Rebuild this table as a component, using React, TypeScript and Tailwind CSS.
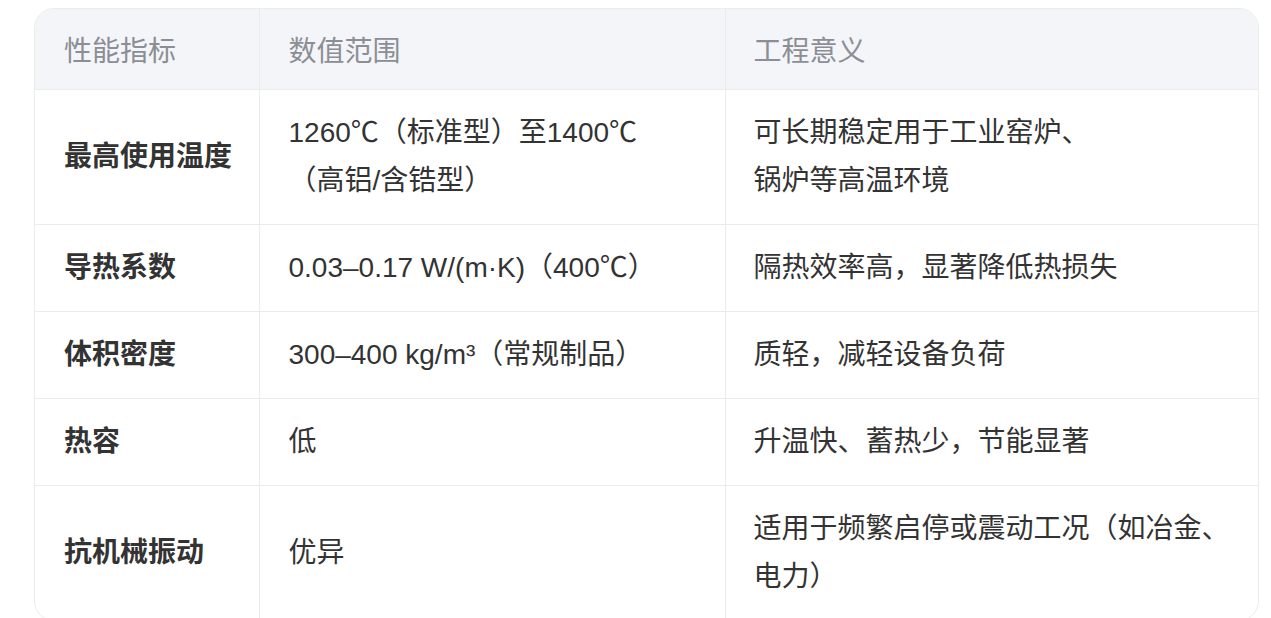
const rows: { name: string; range: React.ReactNode; meaning: React.ReactNode }[] = [
  {
    name: "最高使用温度",
    range: (
      <>
        1260℃（标准型）至1400℃
        <br />
        （高铝/含锆型）
      </>
    ),
    meaning: (
      <>
        可长期稳定用于工业窑炉、
        <br />
        锅炉等高温环境
      </>
    ),
  },
  { name: "导热系数", range: "0.03–0.17 W/(m·K)（400℃）", meaning: "隔热效率高，显著降低热损失" },
  { name: "体积密度", range: "300–400 kg/m³（常规制品）", meaning: "质轻，减轻设备负荷" },
  { name: "热容", range: "低", meaning: "升温快、蓄热少，节能显著" },
  {
    name: "抗机械振动",
    range: "优异",
    meaning: (
      <>
        适用于频繁启停或震动工况（如冶金、
        <br />
        电力）
      </>
    ),
  },
];

export default function App() {
  return (
    <div
      className="h-[618px] overflow-hidden bg-white pl-[34px] pr-[12px] pt-[8px]"
      style={{ fontFamily: '"Liberation Sans", "Noto Sans CJK SC", sans-serif' }}
    >
      <div className="overflow-hidden rounded-[20px] border border-[#ebebeb]">
        <table className="w-full table-fixed border-collapse text-[28px] text-[#333]">
          <colgroup>
            <col className="w-[224px]" />
            <col className="w-[466px]" />
            <col />
          </colgroup>
          <thead>
            <tr className="bg-[#f4f5f8] text-left text-[#8b8e95]">
              <th className="px-[29px] pb-[16px] pt-[22px] font-normal leading-[42px]">性能指标</th>
              <th className="border-l border-[#ebebeb] px-[29px] pb-[16px] pt-[22px] font-normal leading-[42px]">数值范围</th>
              <th className="border-l border-[#ebebeb] px-[28px] pb-[16px] pt-[22px] font-normal leading-[42px]">工程意义</th>
            </tr>
          </thead>
          <tbody>
            {rows.map((r) => (
              <tr key={r.name} className="border-t border-[#ebebeb] align-middle">
                <td className="whitespace-nowrap px-[29px] py-[19px] font-bold leading-[48px]">{r.name}</td>
                <td className="whitespace-nowrap border-l border-[#ebebeb] px-[29px] py-[19px] leading-[48px]">{r.range}</td>
                <td className="whitespace-nowrap border-l border-[#ebebeb] px-[28px] py-[19px] leading-[48px]">{r.meaning}</td>
              </tr>
            ))}
          </tbody>
        </table>
      </div>
    </div>
  );
}
